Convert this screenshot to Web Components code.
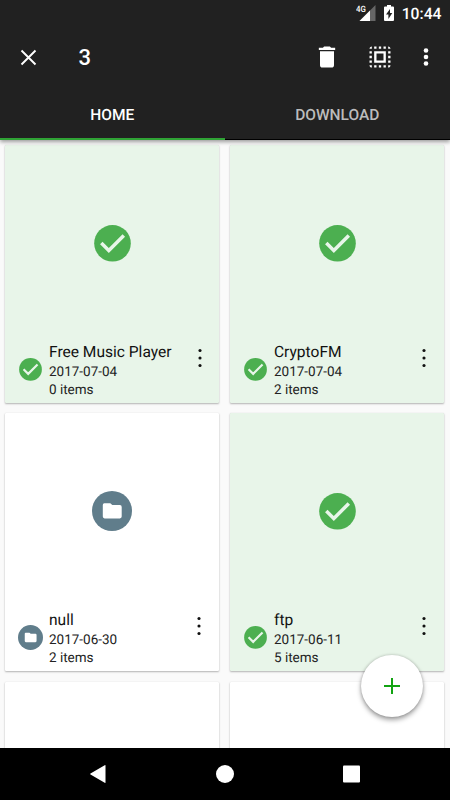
<!DOCTYPE html>
<html lang="en">
<head>
<meta charset="utf-8">
<title>Files</title>
<style>
html, body { margin: 0; height: 100%; overflow: hidden; background: #fafafa; }
</style>
</head>
<body>
<file-app></file-app>
<script>
const define = (name, html, setup) => customElements.define(name, class extends HTMLElement {
  constructor() {
    super();
    const t = document.createElement('template');
    t.innerHTML = html;
    this.attachShadow({ mode: 'open' }).append(t.content.cloneNode(true));
  }
  connectedCallback() { if (setup) setup(this, this.shadowRoot); }
});

define('status-bar', `
<style>
:host { display: flex; height: 28px; box-sizing: border-box; padding-right: 8.500px; justify-content: flex-end; align-items: center; color: #fff; font-size: 15.700px; text-rendering: geometricPrecision; }
svg { display: block; flex: none; }
.net { width: 20px; height: 28px; }
.bat { width: 12px; height: 28px; margin: 0 6.500px 0 7px; }
.time { line-height: 28px; font-weight: 500; width: 40px; display: flex; justify-content: flex-end; white-space: nowrap; }
</style>
<svg class="net" viewBox="0 0 20 28"><path d="M19.500 5v16h-16z" fill="#666"/><path d="M14 10.500V21H3.500z" fill="#fff"/><path d="M0 5h10v8.500H0z" fill="#212121"/><text x="0" y="12.200" font-size="8.700" font-weight="500" fill="#fff" textLength="9.800" lengthAdjust="spacingAndGlyphs">4G</text></svg>
<svg class="bat" viewBox="0 0 12 28"><path fill="#fff" fill-rule="evenodd" d="M4 5h4v1.500h2q1 0 1 1V20q0 1-1 1H2q-1 0-1-1V7.500q0-1 1-1h2zM7 9 3 14.500h2.400V19L9.300 13H7z"/></svg>
<span class="time">10:44</span>`);

define('action-bar', `
<style>
:host { display: flex; height: 58px; box-sizing: border-box; align-items: center; padding: 0 10px 0 14px; color: #fff; }
svg { width: 28px; height: 28px; fill: #fff; flex: none; }
.count { font-size: 22px; font-weight: 500; line-height: 28px; margin-left: 36.500px; flex: 1; padding-top: 2px; }
.sel { margin: 0 18px 0 25px; } .more { width: 28px; }
</style>
<svg viewBox="0 0 28 28"><path d="m7.500 7.500 14 14m0-14-14 14" stroke="#fff" stroke-width="1.900"/></svg>
<span class="count"><slot></slot></span>
<svg viewBox="0 0 24 24"><path d="M6 19c0 1.100.9 2 2 2h8c1.100 0 2-.9 2-2V7H6v12zM19 4h-3.500l-1-1h-5l-1 1H5v2h14V4z"/></svg>
<svg class="sel" viewBox="0 0 24 24"><path d="M3 5h2V3c-1.100 0-2 .9-2 2zm0 8h2v-2H3v2zm4 8h2v-2H7v2zM3 9h2V7H3v2zm10-6h-2v2h2V3zm6 0v2h2c0-1.100-.9-2-2-2zM5 21v-2H3c0 1.100.9 2 2 2zm-2-4h2v-2H3v2zM9 3H7v2h2V3zm2 18h2v-2h-2v2zm8-8h2v-2h-2v2zm0 8c1.100 0 2-.9 2-2h-2v2zm0-12h2V7h-2v2zm0 8h2v-2h-2v2zm-4 4h2v-2h-2v2zm0-16h2V3h-2v2zM7 17h10V7H7v10zm2-8h6v6H9V9z"/></svg>
<svg class="more" viewBox="0 0 28 28"><circle cx="14" cy="7.500" r="2.300"/><circle cx="14" cy="14" r="2.300"/><circle cx="14" cy="20.500" r="2.300"/></svg>`);

define('tab-item', `
<style>
:host { display: flex; flex: 1; height: 54px; box-sizing: border-box; justify-content: center; align-items: center; padding: 5px .5px 0 0; font-size: 15.500px; text-rendering: geometricPrecision; font-weight: 500; color: #bcbcbc; border-bottom: 2px solid transparent; }
:host([active]) { color: #fff; border-bottom-color: #2fa335; }
</style><slot></slot>`);

define('check-badge', `
<style>:host { display: block; } svg { display: block; width: 100%; height: 100%; }</style>
<svg viewBox="0 0 37 37"><circle cx="18.500" cy="18.300" r="18.300" fill="#4caf50"/><path d="m7.300 18.100 7.500 7.400 15-15" fill="none" stroke="#e8f5e9" stroke-width="3.500"/></svg>`);

define('folder-badge', `
<style>:host { display: block; } svg { display: block; width: 100%; height: 100%; }</style>
<svg viewBox="0 0 40 40"><circle cx="20" cy="20" r="20" fill="#607d8b"/><path fill="#fff" d="M12.300 12.200h6l2 1.900h7.600q1.800 0 1.800 1.800v9.700q0 1.800-1.800 1.800H12.600q-1.800 0-1.800-1.800V13.900q0-1.700 1.500-1.700z"/></svg>`);

define('file-card', `
<style>
:host { display: flex; flex-direction: column; height: 258px; background: #fff; color: #111; border-radius: 1px; box-shadow: 0 1px 2px rgba(0,0,0,.28), 0 0 1px rgba(0,0,0,.12); overflow: hidden; }
:host([selected]) { background: #e8f5e9; }
.preview { height: 196px; display: flex; align-items: center; justify-content: center; flex: none; }
.preview > * { width: 40px; height: 40px; }
.preview check-badge { width: 37px; height: 37px; }
.info { display: flex; height: 62px; }
.icon { width: 43.600px; display: flex; justify-content: center; padding: 0 0 0 6px; box-sizing: border-box; align-items: center; height: 57px; }
.icon > * { width: 25px; height: 25px; flex: none; }
.icon check-badge { width: 23px; height: 23px; }
.txt { flex: 1; white-space: nowrap; text-rendering: geometricPrecision; }
.name { font-size: 15.550px; line-height: 20px; height: 20px; padding: 1px 0 1px; }
.sub { font-size: 13.500px; line-height: 18px; color: #222; }
svg { width: 8px; height: 24px; margin: 5px 16px 0 0; flex: none; fill: #111; }
:host([first]) svg { margin-right: 15px; }
</style>
<div class="preview"></div>
<div class="info"><div class="icon"></div>
<div class="txt"><div class="name"><slot></slot></div><div class="sub"><slot name="date"></slot></div><div class="sub"><slot name="count"></slot></div></div>
<svg viewBox="0 0 8 24"><circle cx="4" cy="4.500" r="1.550"/><circle cx="4" cy="12" r="1.550"/><circle cx="4" cy="19.500" r="1.550"/></svg></div>`,
(host, root) => {
  const badge = host.hasAttribute('selected') ? 'check-badge' : 'folder-badge';
  root.querySelector('.preview').replaceChildren(document.createElement(badge));
  root.querySelector('.icon').replaceChildren(document.createElement(badge));
});

define('fab-button', `
<style>
:host { display: flex; width: 62px; height: 62px; border-radius: 50%; background: #fff; align-items: center; justify-content: center; box-shadow: 0 3px 5px rgba(0,0,0,.36), 0 0 3px rgba(0,0,0,.2); }
svg { width: 16px; height: 16px; }
</style>
<svg viewBox="0 0 16 16"><path d="M8 0v16M0 8h16" stroke="#12a312" stroke-width="2"/></svg>`);

define('nav-bar', `
<style>
:host { display: flex; height: 52px; background: #000; align-items: center; justify-content: center; gap: 101px; }
svg { width: 26px; height: 26px; fill: #fff; }
</style>
<svg viewBox="0 0 26 26"><path d="M20.500 4.500v17q0 .8-.8.300L5.500 13.500q-.8-.5 0-1L19.700 4.200q.8-.5.8.3z"/></svg>
<svg viewBox="0 0 26 26"><circle cx="13" cy="13" r="9"/></svg>
<svg viewBox="0 0 26 26"><rect x="4" y="4.500" width="17" height="17" rx="1"/></svg>`);

define('file-app', `
<style>
:host { display: flex; flex-direction: column; width: 450px; height: 800px; position: relative; overflow: hidden; font-family: Roboto, sans-serif; background: #fafafa; }
header { background: #212121; flex: none; z-index: 1; box-shadow: 0 2px 4px rgba(0,0,0,.38); }
nav { display: flex; box-shadow: inset 0 -1px #000; }
main { flex: 1; min-height: 0; overflow: hidden; display: grid; grid-template-columns: 214px 214px; column-gap: 11px; row-gap: 10.400px; padding: 5px 5.400px 0; align-content: start; }
nav-bar { flex: none; z-index: 1; }
fab-button { position: absolute; left: 361px; top: 655px; }
</style>
<header><status-bar></status-bar><action-bar>3</action-bar>
<nav><tab-item active>HOME</tab-item><tab-item>DOWNLOAD</tab-item></nav></header>
<main>
<file-card selected first>Free Music Player<span slot="date">2017-07-04</span><span slot="count">0 items</span></file-card>
<file-card selected>CryptoFM<span slot="date">2017-07-04</span><span slot="count">2 items</span></file-card>
<file-card>null<span slot="date">2017-06-30</span><span slot="count">2 items</span></file-card>
<file-card selected>ftp<span slot="date">2017-06-11</span><span slot="count">5 items</span></file-card>
<file-card></file-card><file-card></file-card>
</main>
<fab-button></fab-button>
<nav-bar></nav-bar>`);
</script>
</body>
</html>
